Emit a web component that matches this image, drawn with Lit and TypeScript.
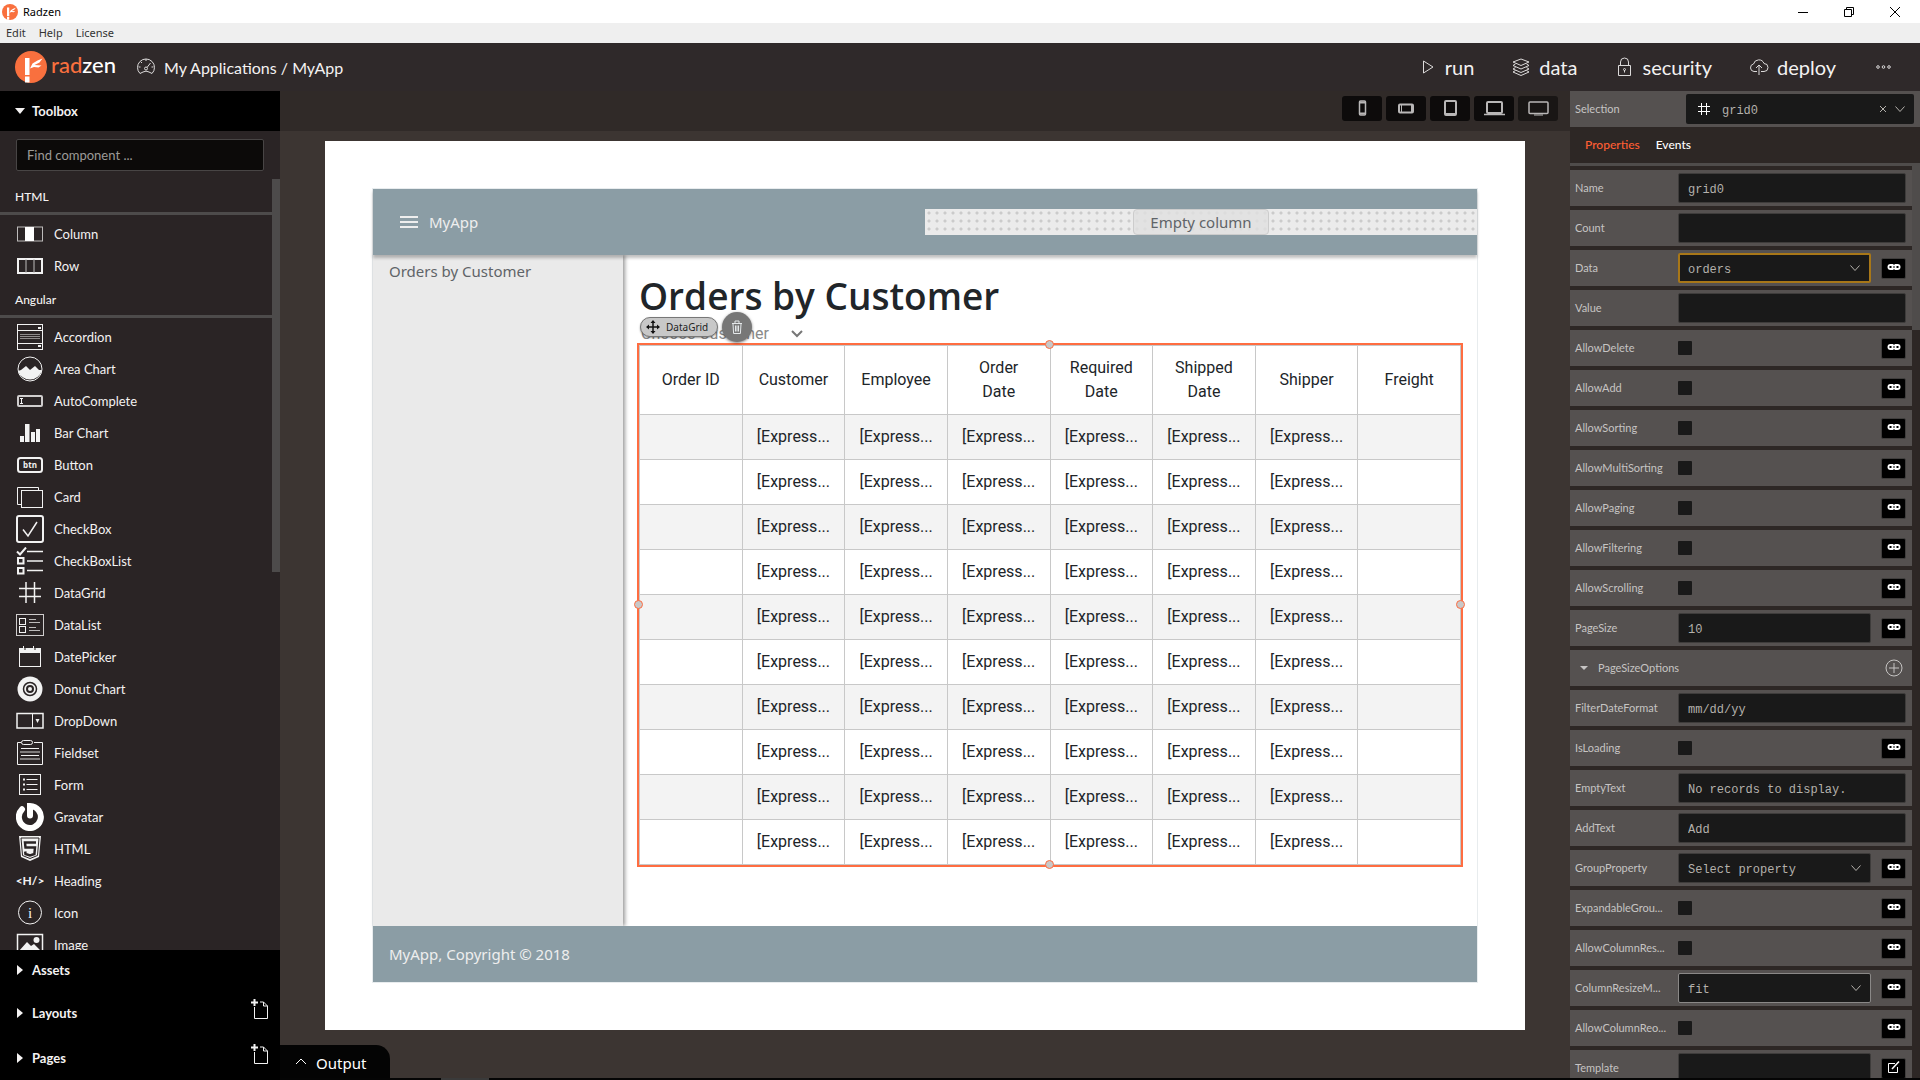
import { LitElement, html, svg, css, nothing, TemplateResult } from "lit";
import { customElement } from "lit/decorators.js";
import { classMap } from "lit/directives/class-map.js";

const toolIcons: Record<string, TemplateResult> = {
  Column: svg`<rect x="1.5" y="7" width="25" height="14" stroke="#bdbbbb"/><rect x="9" y="7" width="9" height="14" fill="#fff" stroke="none"/>`,
  Row: svg`<rect x="2" y="7" width="24" height="14" stroke-width="2"/><path d="M10 7v14M18 7v14" stroke="#bdbbbb"/>`,
  Accordion: svg`<rect x="1.5" y="1.5" width="25" height="25"/><path d="M1 7.5h26M1 20.5h26"/><path d="M4 11.5h20M4 13.5h20M4 15.5h20" stroke="#8f8c8c"/><path d="M22 5h3M22 23h3" stroke-width="2"/>`,
  "Area Chart": svg`<circle cx="14" cy="14" r="12"/><path d="M2 16l3-1 5-4 4 4 5-4 4 4h3a12.500 12.500 0 0 1-24 1z" fill="#f2f2f2" stroke="none"/>`,
  AutoComplete: svg`<rect x="2" y="9" width="24" height="10" rx="1" stroke="#cfcdcd" stroke-width="2"/><path d="M4 11.500h3M5.500 11.500v5M4 16.500h3"/>`,
  "Bar Chart": svg`<path d="M4 17h4v6H4zM9 5h4.500v18H9zM15 13h4v10h-4zM20 10h4v13h-4z" fill="#f2f2f2" stroke="none"/>`,
  Button: svg`<rect x="2" y="7" width="24" height="14" rx="2.500" stroke-width="2"/><text x="14" y="17" text-anchor="middle" font-size="8" font-weight="700" font-family="Open Sans, sans-serif" fill="#f2f2f2" stroke="none">btn</text>`,
  Card: svg`<path d="M5 21.500H1.500v-17h21V7"/><rect x="5.500" y="7.500" width="21" height="17"/>`,
  CheckBox: svg`<rect x="1" y="1" width="26" height="26" rx="2" stroke-width="2"/><path d="M7 14.500l5 6.500 9-14" stroke-width="1.500"/>`,
  CheckBoxList: svg`<path d="M1 4.500l3 3 6-7" stroke-width="2"/><path d="M11 4.500h16M11 14h16M11 23.500h16" stroke-width="1.500"/><rect x="2" y="11" width="5.500" height="5.500" stroke-width="2"/><rect x="2" y="21" width="5.500" height="5.500" stroke-width="2"/>`,
  DataGrid: svg`<path d="M10 3v21M18.500 3v21M3 9.500h22M3 17.500h22" stroke-width="1.500"/>`,
  DataList: svg`<rect x="0.500" y="3.500" width="27" height="21" stroke="#cfcdcd"/><rect x="3.500" y="7.500" width="6" height="6"/><rect x="3.500" y="15.500" width="6" height="6"/><path d="M13 8.500h7M13 11.500h11M13 16.500h7M13 19.500h11" stroke="#bdbbbb"/>`,
  DatePicker: svg`<rect x="3.500" y="5.500" width="21" height="18"/><path d="M3 5h22v5H3z" fill="#f2f2f2" stroke="none"/><path d="M9 3v4M19 3v4" stroke="#2a2425"/><path d="M7.500 3v3M17.500 3v3"/>`,
  "Donut Chart": svg`<circle cx="14" cy="14" r="12.500" fill="#f2f2f2" stroke="none"/><circle cx="14" cy="14" r="6.500" stroke="#2a2425" stroke-width="1.500"/><circle cx="14" cy="14" r="3" stroke="#2a2425" stroke-width="2"/>`,
  DropDown: svg`<rect x="1" y="6.500" width="26" height="14.500" stroke-width="1.500"/><path d="M16.500 6v15"/><path d="M19.500 12h4l-2 4z" fill="#f2f2f2" stroke="none"/>`,
  Fieldset: svg`<path d="M5 3.500H1.500v22h25v-22H18"/><rect x="5.500" y="1.500" width="11" height="4" rx="2"/><path d="M5 9.500h18M5 16.500h18" /><path d="M4 13h20M4 20h20" stroke="#9b9898" stroke-width="1.500"/>`,
  Form: svg`<rect x="3.500" y="3.500" width="21" height="20"/><path d="M10.500 8.500h11M10.500 13.500h11M10.500 18.500h11"/><path d="M7 8.500h2M7 13.500h2M7 18.500h2" stroke-width="2"/>`,
  Gravatar: svg`<path d="M14 12.500V3a11 11 0 1 1-8 3.300" stroke-width="6" stroke-linecap="round" stroke="#fff"/>`,
  HTML: svg`<path d="M3 1h22l-2 21-9 4-9-4z" fill="#f2f2f2" stroke="none"/><path d="M5 3h18l-1.500 17.500L14 23.500l-7.500-3z" fill="none" stroke="#2a2425"/><path d="M20 7.500H9l.5 5h9.500l-.6 6.500L14 20.500 9.500 19l-.3-2.500" stroke="#2a2425" stroke-width="2.500"/>`,
  Heading: svg`<text x="14" y="18" text-anchor="middle" font-size="12" font-weight="700" font-family="Lato, sans-serif" fill="#f2f2f2" stroke="none">&lt;H/&gt;</text>`,
  Icon: svg`<circle cx="14" cy="13.500" r="11.500"/><text x="14" y="18.500" text-anchor="middle" font-size="15" font-family="Liberation Serif, serif" fill="#f2f2f2" stroke="none">i</text>`,
  Image: svg`<rect x="1.500" y="3.500" width="25" height="21" stroke-width="1.500"/><path d="M3 20l8-9 4 4 3-2 7 7v4H3z" fill="#f2f2f2" stroke="none"/><circle cx="20.500" cy="9" r="3" fill="#f2f2f2" stroke="none"/>`,
};

const groups = [
  { title: "HTML", items: ["Column", "Row"] },
  {
    title: "Angular",
    items: ["Accordion", "Area Chart", "AutoComplete", "Bar Chart", "Button", "Card", "CheckBox", "CheckBoxList",
      "DataGrid", "DataList", "DatePicker", "Donut Chart", "DropDown", "Fieldset", "Form", "Gravatar", "HTML",
      "Heading", "Icon", "Image"],
  },
];

const radzenMark = (cls: string) => html`<svg class=${cls} viewBox="0 0 32 32" aria-hidden="true">
  <circle cx="16" cy="16" r="16" fill="#f9703e"/>
  <path d="M10 7h4.500v17H10zM10 25.500h4.500v6H10z" fill="#fff"/>
  <path d="M15 17.500l2.500-5 5-3 5-2-3 4-5 2.500 7 .5-3 2-4.500-.500z" fill="#fff"/>
</svg>`;

const chevron = html`<svg class="chevron" viewBox="0 0 10 10" aria-hidden="true"><path d="M.5 2.500l4.500 5 4.500-5" fill="none" stroke="currentColor"/></svg>`;
const newPage = html`<svg class="new-page" viewBox="0 0 18 20" aria-hidden="true">
  <path d="M3.500 8v11.500h13V7l-4-4H9" fill="none" stroke="#f2f2f2"/><path d="M12.500 3v4h4" fill="none" stroke="#f2f2f2"/><path d="M0 3.500h7M3.500 0v7" stroke="#f2f2f2" stroke-width="2"/></svg>`;
const linkIcon = html`<svg class="link-icon" viewBox="0 0 14 8" aria-hidden="true">
  <rect x=".5" y="1" width="13" height="6" rx="3" fill="#fff"/><path d="M2.500 4h2M9.500 4h2" stroke="#000" stroke-width="2"/><path d="M6 4h2" stroke="#000"/><path d="M7 1v1M7 6v1" stroke="#000"/></svg>`;

interface Prop { label: string; kind: "text" | "check" | "select" | "group" | "template"; value?: string; bind?: boolean; state?: string }
const props: Prop[] = [
  { label: "Name", kind: "text", value: "grid0" },
  { label: "Count", kind: "text" },
  { label: "Data", kind: "select", value: "orders", bind: true, state: "focused" },
  { label: "Value", kind: "text" },
  { label: "AllowDelete", kind: "check", bind: true },
  { label: "AllowAdd", kind: "check", bind: true },
  { label: "AllowSorting", kind: "check", bind: true },
  { label: "AllowMultiSorting", kind: "check", bind: true },
  { label: "AllowPaging", kind: "check", bind: true },
  { label: "AllowFiltering", kind: "check", bind: true },
  { label: "AllowScrolling", kind: "check", bind: true },
  { label: "PageSize", kind: "text", value: "10", bind: true },
  { label: "PageSizeOptions", kind: "group" },
  { label: "FilterDateFormat", kind: "text", value: "mm/dd/yy" },
  { label: "IsLoading", kind: "check", bind: true },
  { label: "EmptyText", kind: "text", value: "No records to display." },
  { label: "AddText", kind: "text", value: "Add" },
  { label: "GroupProperty", kind: "select", value: "Select property", bind: true },
  { label: "ExpandableGrou...", kind: "check", bind: true },
  { label: "AllowColumnRes...", kind: "check", bind: true },
  { label: "ColumnResizeM...", kind: "select", value: "fit", bind: true, state: "outlined" },
  { label: "AllowColumnReo...", kind: "check", bind: true },
  { label: "Template", kind: "template" },
];

const base = css`
  :host { display: block; box-sizing: border-box; }
  *, *::before, *::after { box-sizing: border-box; }
  button, input, select { font: inherit; color: inherit; margin: 0; padding: 0; border: 0; background: none; border-radius: 0; outline: 0; }
  select { appearance: none; }
  button { display: flex; align-items: center; text-align: left; white-space: nowrap; }
  a { color: inherit; text-decoration: none; }
  svg { display: block; flex: none; }
`;

@customElement("app-titlebar")
export class AppTitlebar extends LitElement {
  static styles = [base, css`
    :host { font: 11px/20px "Noto Sans", sans-serif; color: #000; }
    .title { display: flex; align-items: center; height: 23px; background: #fff; padding: 0 20px 0 2px; gap: 5px; }
    .mark { width: 16px; height: 16px; }
    .name { flex: 1; line-height: 23px; }
    .windows { display: flex; gap: 36px; }
    .windows svg { width: 10px; height: 10px; }
    .menu { display: flex; gap: 13px; height: 20px; padding: 0 6px; background: #efefef; color: #333; }
  `];
  render() {
    return html`
      <div class="title">${radzenMark("mark")}<span class="name">Radzen</span>
        <div class="windows">
          <button aria-label="Minimize"><svg viewBox="0 0 10 10"><path d="M0 5.500h10" stroke="#000"/></svg></button>
          <button aria-label="Restore"><svg viewBox="0 0 10 10" fill="none" stroke="#000"><path d="M.5 2.500h7v7h-7zM2.500 2.500v-2h7v7h-2"/></svg></button>
          <button aria-label="Close"><svg viewBox="0 0 10 10"><path d="M0 0l10 10M10 0L0 10" stroke="#000"/></svg></button>
        </div>
      </div>
      <nav class="menu"><button>Edit</button><button>Help</button><button>License</button></nav>`;
  }
}

@customElement("app-header")
export class AppHeader extends LitElement {
  static styles = [base, css`
    :host { display: flex; align-items: center; height: 48px; padding: 0 27px 0 15px; background: #2f292a; color: #f4f2f2; font-family: Lato, sans-serif; }
    .brand { display: flex; align-items: center; gap: 4px; font-size: 22px; line-height: 32px; font-weight: 500; color: #fff; }
    .brand .text { padding-bottom: 4px; }
    .logo { width: 32px; height: 32px; }
    .orange { color: #f9703e; }
    .crumbs { display: flex; align-items: center; gap: 8px; margin-left: 20px; font-size: 16px; line-height: 24px; }
    .gauge { width: 20px; height: 20px; }
    .crumbs .text { padding-top: 2px; }
    .actions { display: flex; gap: 37px; margin-left: auto; font-size: 20px; line-height: 28px; }
    .actions button { gap: 8px; }
    .actions svg { width: 20px; height: 20px; fill: none; stroke: #dcdada; }
  `];
  render() {
    return html`
      <a class="brand" href="#">${radzenMark("logo")}<span class="text"><span class="orange">rad</span>zen</span></a>
      <a class="crumbs" href="#">
        <svg class="gauge" viewBox="0 0 20 20" fill="none" stroke="#dcdada"><path d="M4 16.500a8.500 8.500 0 1 1 12 0l-3-1.500a6 6 0 0 0-6 0z"/><circle cx="10" cy="11.500" r="1.500"/><path d="M11 10.500l3.500-4.500M10 2v2M5 5l1 1M2.500 10h2M15.500 10h2"/></svg>
        <span class="text">My Applications / MyApp</span>
      </a>
      <nav class="actions">
        <button><svg viewBox="0 0 20 20"><path d="M6.500 4v12l9.500-6z"/></svg><span class="text">run</span></button>
        <button><svg viewBox="0 0 20 20"><path d="M10 2l8 3-8 3.500L2 5z"/><path d="M4.500 7L2 8.500l8 3.500 8-3.500L15.500 7M4.500 10.500L2 12l8 3.500 8-3.500-2.500-1.500M4.500 13.500L2 15l8 3.500 8-3.500-2.500-1.500"/></svg><span class="text">data</span></button>
        <button><svg viewBox="0 0 20 20"><path d="M4.500 8.500h12v10h-12zM6.500 8.500V5a4 4 0 0 1 8 0v3.500"/><circle cx="10.500" cy="12.500" r="1"/><path d="M10.500 13v2.500"/></svg><span class="text">security</span></button>
        <button><svg viewBox="0 0 20 20"><path d="M8 14.500H5A3.800 3.800 0 0 1 4.500 7 5.500 5.500 0 0 1 15 6.500a4 4 0 0 1 0 8h-3M10 18V8M7 11l3-3 3 3"/></svg><span class="text">deploy</span></button>
        <button aria-label="More"><svg viewBox="0 0 20 20"><circle cx="5" cy="10" r="1.300"/><circle cx="10.500" cy="10" r="1.300"/><circle cx="16" cy="10" r="1.300"/></svg></button>
      </nav>`;
  }
}

@customElement("tool-sidebar")
export class ToolSidebar extends LitElement {
  static styles = [base, css`
    :host { display: flex; flex-direction: column; width: 280px; flex: none; background: #000; color: #f4f2f2; font: 13px/20px Lato, sans-serif; min-height: 0; }
    .section { display: flex; align-items: center; height: 40px; flex: none; width: 100%; gap: 7px; padding: 0 11px 0 15px; font-weight: 700; }
    .section.tall { height: 45px; }
    .section svg.arrow { width: 10px; height: 10px; fill: #f4f2f2; }
    .section .name { flex: 1; }
    .new-page { width: 18px; height: 20px; margin-bottom: 7px; }
    .toolbox { flex: 1; min-height: 0; display: flex; flex-direction: column; background: #2a2425; }
    .search { margin: 8px 16px; height: 32px; flex: none; padding: 0 10px; background: #0c0a09; border: 1px solid #484545; border-radius: 2px; }
    .search::placeholder { color: #9d9b98; opacity: 1; }
    .scroller { flex: 1; min-height: 0; display: flex; }
    .list { flex: 1; overflow: hidden; }
    .thumb { width: 8px; height: 51%; background: #4d4b4b; }
    .group { margin: 0 0 3px; height: 36px; padding-top: 3px; padding-left: 15px; border-bottom: 3px solid #4d4b4b; font-size: 12px; line-height: 30px; font-weight: 500; }
    .item { height: 32px; width: 100%; padding-left: 16px; gap: 10px; }
    .item svg { width: 28px; height: 28px; fill: none; stroke: #f2f2f2; }
  `];
  private closed(name: string, add: boolean) {
    return html`<button class=${classMap({ section: true, tall: add })}>
      <svg class="arrow" viewBox="0 0 10 10"><path d="M2 0l6 5-6 5z"/></svg><span class="name">${name}</span>${add ? newPage : nothing}</button>`;
  }
  render() {
    return html`
      <button class="section"><svg class="arrow" viewBox="0 0 10 10"><path d="M0 2h10L5 8z"/></svg><span class="name">Toolbox</span></button>
      <div class="toolbox">
        <input class="search" type="text" aria-label="Find component" placeholder="Find component ...">
        <div class="scroller">
          <div class="list">${groups.map((g) => html`
            <h2 class="group">${g.title}</h2>
            ${g.items.map((i) => html`<button class="item"><svg viewBox="0 0 28 28" aria-hidden="true">${toolIcons[i]}</svg>${i}</button>`)}`)}
          </div>
          <div class="thumb"></div>
        </div>
      </div>
      ${this.closed("Assets", false)}${this.closed("Layouts", true)}${this.closed("Pages", true)}`;
  }
}

const devices = [
  { name: "Phone", art: svg`<rect x="7.500" y="3" width="6" height="14" rx="1" stroke-width="1.500"/><path d="M7 4.500h7M7 15.500h7" stroke-width="2"/>` },
  { name: "Phone landscape", art: svg`<rect x="3" y="6.500" width="14" height="8" rx="1" stroke-width="2"/><path d="M5.500 6v8M15.500 6v8"/>` },
  { name: "Tablet", art: svg`<rect x="5" y="3" width="11" height="14" rx="1" stroke-width="2"/><path d="M5 16h11" stroke-width="2"/>` },
  { name: "Laptop", art: svg`<rect x="3" y="4" width="15" height="11" rx="1" stroke-width="2"/><path d="M0 16.500h21" stroke-width="1.500"/>` },
  { name: "Desktop", art: svg`<rect x="1" y="4" width="19" height="11.500" rx="1" stroke-width="1.500"/><path d="M6 17h9"/>` },
];
const columns = ["Order ID", "Customer", "Employee", "Order Date", "Required Date", "Shipped Date", "Shipper", "Freight"];

@customElement("design-surface")
export class DesignSurface extends LitElement {
  static styles = [base, css`
    :host { display: flex; flex-direction: column; flex: 1; min-width: 0; background: #3c3532; font: 15px/24px "Noto Sans", sans-serif; }
    .devices { display: flex; justify-content: flex-end; align-items: center; gap: 4px; height: 40px; padding: 0 12px 6px 0; background: #302a28; flex: none; }
    .devices button { justify-content: center; width: 40px; height: 25px; border-radius: 3px; background: #0d0b0b; }
    .devices button:last-child { background: #191615; }
    .devices svg { width: 21px; height: 20px; fill: none; stroke: #b9b7b7; }
    .canvas { flex: 1; min-height: 0; display: flex; margin: 10px 45px 0; padding: 47px; background: #fff; }
    .page { flex: 1; min-width: 0; display: flex; flex-direction: column; border: 1px solid #e8ecee; }
    .top { position: relative; z-index: 1; display: flex; align-items: center; height: 66px; flex: none; background: #8b9da5; color: #eee; box-shadow: 0 3px 3px rgba(0, 0, 0, .25); }
    .app { flex: 1 1 50%; display: flex; align-items: center; gap: 11px; padding-left: 27px; }
    .burger { width: 18px; height: 14px; }
    .slot { flex: 1 1 50%; display: flex; justify-content: center; height: 26px; background: radial-gradient(circle, #cbcbcb 1px, transparent 2px) 0 0 / 8px 8px #ebebeb; }
    .chip { padding: 0 16px; border: 1px solid #ccc; border-radius: 4px; background: rgba(224, 224, 224, .8); color: #606468; }
    .middle { flex: 1; min-height: 0; display: flex; }
    .side { width: 250px; flex: none; padding: 4px 16px; background: #eaeaea; color: #5f6468; box-shadow: 2px 0 4px rgba(0, 0, 0, .4); }
    .content { flex: 1; min-width: 0; padding: 17px 16px 0; }
    h1 { margin: 0 0 2px; font: 600 37px/48px "Open Sans", sans-serif; color: #212529; }
    .choose { display: flex; align-items: center; gap: 22px; height: 23px; padding-left: 2px; font: 16px/23px Roboto, sans-serif; color: #8a8a8a; }
    .choose svg { width: 12px; height: 12px; }
    .selected { position: relative; outline: 2px solid #ff6d41; font-family: Roboto, sans-serif; }
    .badge { position: absolute; left: 1px; top: -28px; height: 20px; display: flex; align-items: center; gap: 6px; padding: 0 9px 0 5px; border: 1px solid #777; border-radius: 10px; background: #c8c8c8; color: #222; font: 10px/18px "Noto Sans", sans-serif; box-shadow: 0 1px 2px rgba(0, 0, 0, .4); }
    .badge svg { width: 14px; height: 14px; }
    .trash { position: absolute; left: 83px; top: -33px; width: 30px; height: 30px; border-radius: 15px; justify-content: center; background: #777; box-shadow: 0 1px 3px rgba(0, 0, 0, .5); }
    .trash svg { width: 12px; height: 14px; }
    .handle { position: absolute; width: 9px; height: 9px; margin: -5px; border: 1px solid #ff6d41; border-radius: 5px; background: #c8c8c8; }
    .n { left: 50%; top: 0; } .s { left: 50%; top: 100%; } .w { left: 0; top: 50%; } .e { left: 100%; top: 50%; }
    table { width: 100%; table-layout: fixed; border-collapse: collapse; font-size: 16px; line-height: 24px; color: #212529; }
    th, td { border: 1px solid #c8c8c8; padding: 0 14px; text-align: center; font-weight: 400; background: #fff; white-space: nowrap; }
    th { height: 69px; white-space: normal; padding: 0 16px; }
    td { height: 45px; }
    tbody tr:nth-child(odd) td { background: #f3f3f3; }
    .foot { height: 56px; flex: none; padding: 0 16px; line-height: 56px; background: #8b9da5; color: #eee; }
    .output { align-self: flex-start; margin-top: 15px; height: 33px; padding: 0 24px 2px 16px; gap: 10px; border-radius: 0 14px 0 0; background: #040404; color: #fff; }
    .output svg { width: 10px; height: 10px; }
    .output .text { padding-top: 4px; }
  `];
  render() {
    return html`
      <div class="devices">${devices.map((d) => html`<button aria-label=${d.name}><svg viewBox="0 0 21 20">${d.art}</svg></button>`)}</div>
      <div class="canvas"><div class="page">
        <header class="top">
          <div class="app"><svg class="burger" viewBox="0 0 18 14"><path d="M0 2h18M0 7h18M0 12h18" stroke="#eee" stroke-width="2"/></svg>MyApp</div>
          <div class="slot"><span class="chip">Empty column</span></div>
        </header>
        <div class="middle">
          <nav class="side"><a href="#">Orders by Customer</a></nav>
          <main class="content">
            <h1>Orders by Customer</h1>
            <div class="choose">Choose Customer<svg viewBox="0 0 12 12"><path d="M1 3l5 5 5-5" fill="none" stroke="#777" stroke-width="2"/></svg></div>
            <div class="selected">
              <table>
                <thead><tr>${columns.map((c) => html`<th>${c}</th>`)}</tr></thead>
                <tbody>${Array.from({ length: 10 }, () => html`<tr>${columns.map((_, i) => html`<td>${i > 0 && i < 7 ? "[Express..." : nothing}</td>`)}</tr>`)}</tbody>
              </table>
              <span class="handle n"></span><span class="handle s"></span><span class="handle w"></span><span class="handle e"></span>
              <span class="badge"><svg viewBox="0 0 14 14"><path d="M7 1v12M1 7h12" stroke="#111" stroke-width="1.500"/><path d="M7 0l2.500 3h-5zM7 14l2.500-3h-5zM0 7l3-2.500v5zM14 7l-3-2.500v5z" fill="#111"/></svg>DataGrid</span>
              <button class="trash" aria-label="Delete"><svg viewBox="0 0 12 14" fill="none" stroke="#e4e8ea"><path d="M1 3.500h10M4 3V1h4v2M2 4l.6 9.500h6.800L10 4M4.500 5.500v6M6 5.500v6M7.500 5.500v6"/></svg></button>
            </div>
          </main>
        </div>
        <footer class="foot">MyApp, Copyright © 2018</footer>
      </div></div>
      <button class="output"><svg viewBox="0 0 10 10"><path d="M0 8l5-5 5 5" fill="none" stroke="#fff"/></svg><span class="text">Output</span></button>`;
  }
}

@customElement("property-panel")
export class PropertyPanel extends LitElement {
  static styles = [base, css`
    :host { display: flex; flex-direction: column; width: 350px; flex: none; min-height: 0; background: #2d2725; color: #c6c4c3; font: 11px/16px Lato, sans-serif; }
    .row { display: flex; align-items: center; height: 36px; flex: none; padding: 0 6px 0 5px; background: #555150; }
    .row > label { width: 103px; flex: none; }
    .row.head > label { width: 111px; }
    .field { flex: 1; min-width: 0; height: 30px; display: grid; grid-template-columns: 1fr 10px; align-items: center; background: #191919; border: 1px solid #3e3c3b; border-radius: 2px; color: #b4b1ac; font: 12px/16px "Liberation Mono", monospace; }
    .field > * { grid-row: 1; }
    input.field { display: block; padding: 3px 9px 0; }
    .field select { grid-column: 1 / -1; width: 100%; height: 28px; padding: 3px 9px 0; }
    .field .chevron { grid-column: 2; width: 10px; height: 10px; margin-left: -9px; pointer-events: none; }
    .field.focused { border: 2px solid #a87718; }
    .field.focused select { height: 26px; padding-left: 8px; }
    .field.outlined { border-color: #8a8887; }
    .field.pick { display: flex; padding: 0 9px 0 11px; border: 0; gap: 9px; }
    .head { padding-right: 6px; }
    .pick select { flex: 1; padding: 3px 2px 0; }
    .pick .hash { width: 14px; height: 14px; }
    .pick .cross { width: 6px; height: 6px; }
    .pick .chevron { margin: 0; }
    .check { appearance: none; width: 14px; height: 14px; background: #191919; border-radius: 1px; }
    .bind { width: 25px; height: 21px; margin-left: auto; padding-bottom: 2px; flex: none; justify-content: center; background: #000; border: 1px solid #403e3d; border-radius: 2px; }
    .field + .bind { margin-left: 10px; }
    .link-icon { width: 14px; height: 8px; }
    .edit { width: 13px; height: 13px; }
    .tabs { display: flex; align-items: center; gap: 16px; height: 36px; flex: none; padding: 0 15px; font-size: 12px; font-weight: 500; color: #fff; }
    .tabs .active { color: #ff5e33; }
    .scroller { flex: 1; min-height: 0; display: flex; border-top: 3px solid #4f4c4b; }
    .list { flex: 1; min-width: 0; overflow: hidden; display: flex; flex-direction: column; gap: 4px; padding-top: 4px; }
    .thumb { width: 8px; height: 18%; background: #4f4c4b; }
    .expander { flex: 1; gap: 10px; padding-left: 5px; }
    .expander svg { width: 8px; height: 8px; fill: #c6c4c3; }
    .add svg { width: 18px; height: 18px; margin-right: 3px; }
  `];
  private control(p: Prop, id: string) {
    if (p.kind === "text" || p.kind === "template") return html`<input class="field" id=${id} type="text" .value=${p.value ?? ""}>`;
    if (p.kind === "check") return html`<input class="check" id=${id} type="checkbox">`;
    return html`<div class=${classMap({ field: true, focused: p.state === "focused", outlined: p.state === "outlined" })}>
      <select id=${id}><option>${p.value}</option></select>${chevron}</div>`;
  }
  private row(p: Prop, n: number) {
    const id = `prop-${n}`;
    if (p.kind === "group") return html`<div class="row">
      <button class="expander"><svg viewBox="0 0 8 8"><path d="M0 2h8L4 6z"/></svg>${p.label}</button>
      <button class="add" aria-label="Add page size"><svg viewBox="0 0 18 18" fill="none" stroke="#c6c4c3"><circle cx="9" cy="9" r="8"/><path d="M9 4v10M4 9h10"/></svg></button></div>`;
    return html`<div class="row"><label for=${id}>${p.label}</label>${this.control(p, id)}
      ${p.bind ? html`<button class="bind" aria-label="Bind">${linkIcon}</button>` : nothing}
      ${p.kind === "template" ? html`<button class="bind" aria-label="Edit template"><svg class="edit" viewBox="0 0 13 13" fill="none" stroke="#fff"><path d="M8 2.500H1.500v9h9V6"/><path d="M5 8l7-7.500" stroke-width="1.500"/></svg></button>` : nothing}</div>`;
  }
  render() {
    return html`
      <div class="row head"><label for="selection">Selection</label>
        <div class="field pick">
          <svg class="hash" viewBox="0 0 14 14"><path d="M4.500 1v12M9.500 1v12M1 4.500h12M1 9.500h12" stroke="#fff"/></svg>
          <select id="selection"><option>grid0</option></select>
          <button aria-label="Clear selection"><svg class="cross" viewBox="0 0 6 6"><path d="M0 0l6 6M6 0L0 6" stroke="#b4b1ac"/></svg></button>${chevron}
        </div></div>
      <nav class="tabs"><button class="active">Properties</button><button>Events</button></nav>
      <div class="scroller"><div class="list">${props.map((p, n) => this.row(p, n))}</div><div class="thumb"></div></div>`;
  }
}

@customElement("app-root")
export class AppRoot extends LitElement {
  static styles = [base, css`
    :host { display: flex; flex-direction: column; height: 100vh; overflow: hidden; }
    .body { flex: 1; min-height: 0; display: flex; }
    .right { flex: 1; min-width: 0; display: flex; flex-direction: column; }
    .work { flex: 1; min-height: 0; display: flex; }
    .strip { height: 2px; flex: none; padding-left: 161px; background: #050505; }
    .strip div { width: 48px; height: 2px; background: #3a3a3a; }
  `];
  render() {
    return html`
      <app-titlebar></app-titlebar>
      <app-header></app-header>
      <div class="body">
        <tool-sidebar></tool-sidebar>
        <div class="right">
          <div class="work"><design-surface></design-surface><property-panel></property-panel></div>
          <div class="strip"><div></div></div>
        </div>
      </div>`;
  }
}
